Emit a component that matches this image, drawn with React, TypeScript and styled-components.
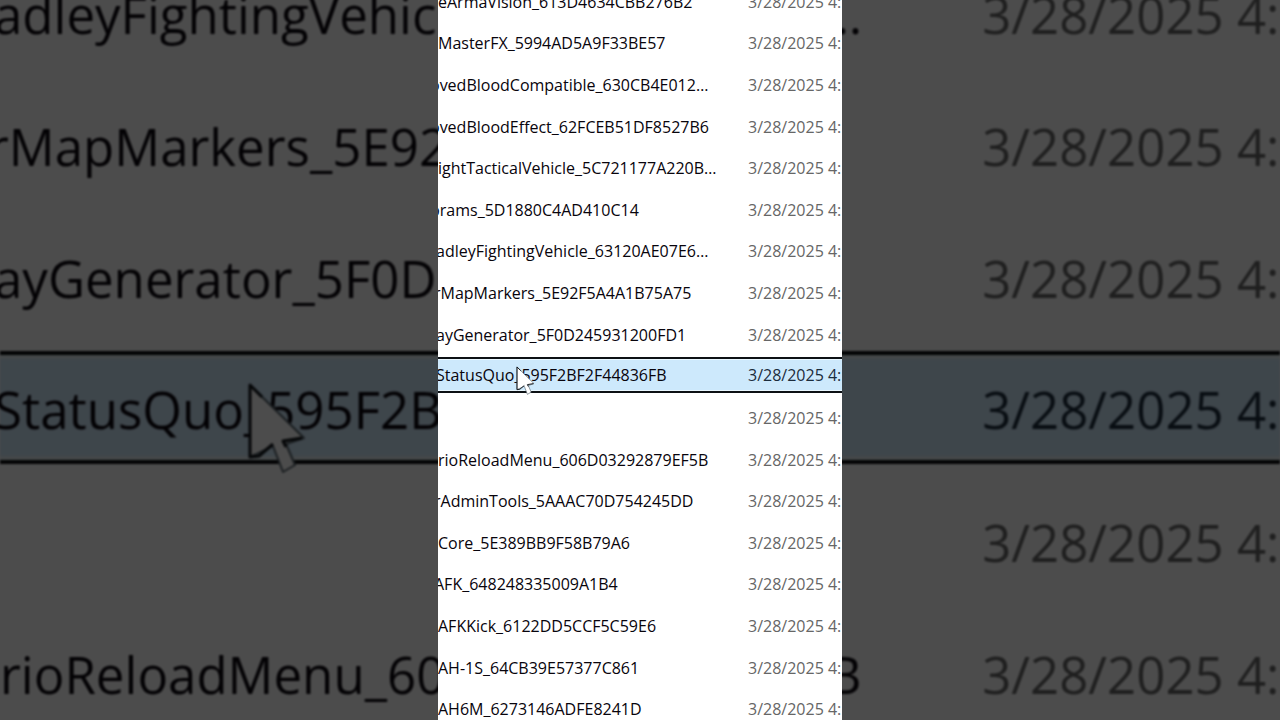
import React from "react";
import styled, { createGlobalStyle, css } from "styled-components";

const GlobalStyle = createGlobalStyle`
  *, *::before, *::after { box-sizing: border-box; }
  body { margin: 0; background: #4c4c4c; overflow: hidden; }
`;

type Size = "normal" | "large";

interface FileRow {
  name: string;
  /* how far the name is scrolled past the left edge, in px at normal size */
  cut: number;
  selected?: boolean;
}

const files: FileRow[] = [
  { name: "eArmaVision_613D4634CBB276B2", cut: 0 },
  { name: "MasterFX_5994AD5A9F33BE57", cut: 0 },
  { name: "ovedBloodCompatible_630CB4E012…", cut: 8 },
  { name: "ovedBloodEffect_62FCEB51DF8527B6", cut: 8 },
  { name: "ightTacticalVehicle_5C721177A220B…", cut: 0 },
  { name: "brams_5D1880C4AD410C14", cut: 8 },
  { name: "adleyFightingVehicle_63120AE07E6…", cut: 2 },
  { name: "rMapMarkers_5E92F5A4A1B75A75", cut: 4 },
  { name: "ayGenerator_5F0D245931200FD1", cut: 2 },
  { name: "StatusQuo_595F2BF2F44836FB", cut: 2, selected: true },
  { name: "", cut: 0 },
  { name: "rioReloadMenu_606D03292879EF5B", cut: 0 },
  { name: "rAdminTools_5AAAC70D754245DD", cut: 4 },
  { name: "Core_5E389BB9F58B79A6", cut: 0 },
  { name: "AFK_648248335009A1B4", cut: 4 },
  { name: "AFKKick_6122DD5CCF5C59E6", cut: 0 },
  { name: "AH-1S_64CB39E57377C861", cut: 0 },
  { name: "AH6M_6273146ADFE8241D", cut: 0 },
];

const Stage = styled.main`
  display: grid;
  grid-template: 100vh / 100%;
  justify-items: center;
  overflow: hidden;
`;

const Backdrop = styled.div`
  grid-area: 1 / 1;
  width: 100%;
  overflow: hidden;
  background: #fff;
  filter: brightness(0.3);
`;

const Panel = styled.section`
  grid-area: 1 / 1;
  position: relative;
  height: 100%;
  aspect-ratio: 101 / 180;
  overflow: hidden;
  background: #fff;
`;

const Table = styled.table<{ $size: Size }>`
  display: block;
  font-family: "Open Sans", "Noto Sans", sans-serif;
  white-space: nowrap;
  ${({ $size }) =>
    $size === "large"
      ? css`
          margin-top: -51px;
          height: 791px;
          font-size: 51px;
          filter: blur(1px);
        `
      : css`
          margin-top: -19px;
          height: 749px;
          font-size: 16px;
        `}
`;

const Body = styled.tbody`
  display: grid;
  height: 100%;
  grid-auto-rows: 1fr;
`;

const Row = styled.tr<{ $selected?: boolean; $size: Size }>`
  position: relative;
  display: grid;
  grid-template-columns: 310fr 94fr;
  align-items: center;
  min-height: 0;
  color: #666;
  ${({ $selected, $size }) =>
    $selected &&
    ($size === "large"
      ? css`
          color: #1b2c3c;
          background: #cfe8fa;
          border: solid #06080a;
          border-width: 4px 0;
          margin: 7px 0 12px;
          padding-top: 4px;
          box-shadow: inset 0 4px #e4eff4, inset 0 -4px #e4eff4;
        `
      : css`
          color: #1b2c3c;
          background: #cde9fc;
          border: solid #0c1014;
          border-width: 2px 0;
          margin: 2px 0 4px;
          box-shadow: inset 0 1px #e9f7ff, inset 0 -1px #e9f7ff;
        `)}
`;

const Name = styled.td<{ $cut: number }>`
  min-width: 0;
  padding: 0;
  line-height: 1;
  color: #08040c;
  text-indent: ${({ $cut }) => -$cut}px;
`;

const DateCell = styled.td`
  min-width: 0;
  padding: 0;
  line-height: 1;
`;

const CursorIcon = styled.svg<{ $size: Size }>`
  position: absolute;
  ${({ $size }) =>
    $size === "large"
      ? css`
          left: 247px;
          top: 27px;
          width: 60px;
          height: 92px;
        `
      : css`
          left: 78px;
          top: 7px;
          width: 19px;
          height: 29px;
        `}
`;

function Cursor({ size }: { size: Size }) {
  return (
    <CursorIcon $size={size} viewBox="-3 -3 60 92" aria-hidden="true">
      <path
        d="M0 0V72L23 61L33 87L45 80L36 59L54 53Z"
        fill="#fff"
        stroke="#56636c"
        strokeWidth="2"
        strokeLinejoin="round"
      />
      <path
        d="M12 12L0 0V72L9 71L23 59M36 62L33 56L52 53"
        fill="none"
        stroke="#10151a"
        strokeWidth="3"
        strokeLinejoin="round"
      />
    </CursorIcon>
  );
}

function FileTable({ rows, size }: { rows: FileRow[]; size: Size }) {
  const factor = size === "large" ? 3 : 1;
  return (
    <Table $size={size}>
      <Body>
        {rows.map((file, i) => (
          <Row key={i} $selected={file.selected} $size={size}>
            <Name $cut={file.cut * factor}>
              {file.name}
              {file.selected && <Cursor size={size} />}
            </Name>
            <DateCell>3/28/2025 4:</DateCell>
          </Row>
        ))}
      </Body>
    </Table>
  );
}

export default function App() {
  return (
    <>
      <GlobalStyle />
      <Stage>
        <Backdrop aria-hidden="true">
          <FileTable rows={files.slice(6, 12)} size="large" />
        </Backdrop>
        <Panel aria-label="Files">
          <FileTable rows={files} size="normal" />
        </Panel>
      </Stage>
    </>
  );
}
